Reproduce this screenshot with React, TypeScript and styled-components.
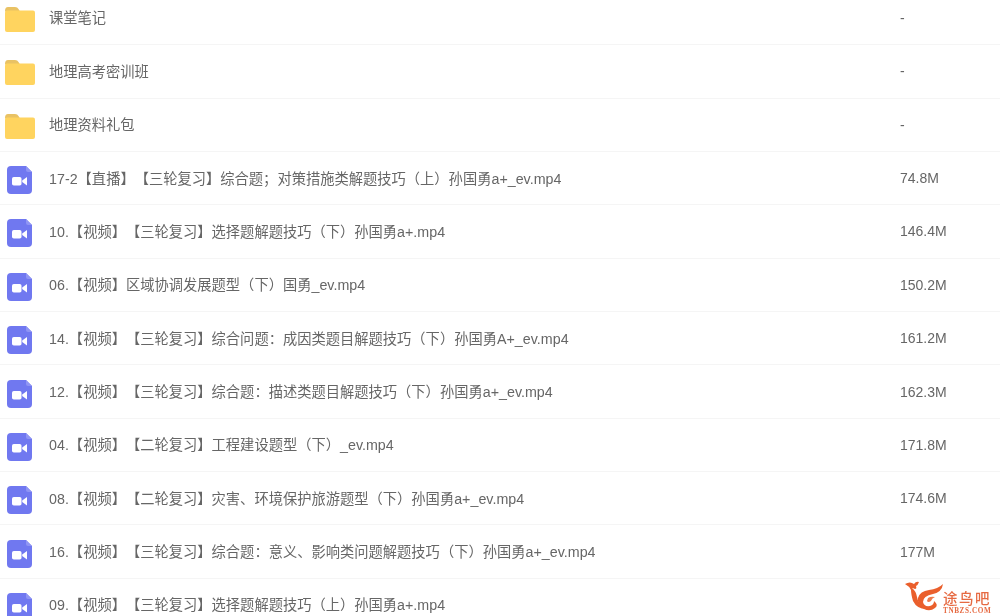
import React from "react";
import styled, { createGlobalStyle } from "styled-components";

const Global = createGlobalStyle`
  html, body { margin: 0; padding: 0; background: #fff; }
  body { width: 1000px; height: 616px; overflow: hidden; }
`;

const Page = styled.div`
  position: relative;
  width: 1000px;
  height: 616px;
  overflow: hidden;
  background: #fff;
  font-family: "Liberation Sans", "Noto Sans CJK SC", sans-serif;
  filter: blur(0.3px);
`;

const List = styled.ul`
  list-style: none;
  margin: -8.2px 0 0;
  padding: 0;
`;

const Row = styled.li`
  box-sizing: border-box;
  height: 53.36px;
  display: grid;
  grid-template-columns: 49px 851px 100px;
  align-items: center;
  border-bottom: 1px solid #f5f5f5;
  color: #666;
  font-size: 14.25px;
`;

const IconCell = styled.div<{ $kind: "folder" | "video" }>`
  display: flex;
  align-items: center;
  padding-left: ${(p) => (p.$kind === "folder" ? "5px" : "7px")};
  padding-top: ${(p) => (p.$kind === "folder" ? "3px" : "4px")};
`;

const Name = styled.span`
  white-space: nowrap;
  text-spacing-trim: space-all;
  letter-spacing: 0.02px;
  margin-top: -2px;
`;

const Size = styled.span`
  white-space: nowrap;
  font-size: 14px;
`;

const Mark = styled.div`
  position: absolute;
  left: 904px;
  top: 580px;
  display: flex;
  align-items: flex-start;
`;

const MarkText = styled.div`
  display: flex;
  flex-direction: column;
  margin-top: 10px;
  color: #e66a42;
  font-family: "Noto Sans CJK SC", sans-serif;
`;

const MarkTitle = styled.span`
  font-size: 14.5px;
  line-height: 15px;
  font-weight: 500;
  letter-spacing: 1.5px;
`;

const MarkSub = styled.span`
  font-family: "Liberation Serif", serif;
  font-size: 7.2px;
  line-height: 8px;
  margin-top: 2px;
  font-weight: 700;
  letter-spacing: 0.6px;
`;

const Folder = () => (
  <svg width="30" height="25" viewBox="0 0 30 25">
    <path d="M0 4 Q0 0 3 0 H10 Q12.5 0 13.5 2 L15 4.5 H0 Z" fill="#e9c264" />
    <rect x="0" y="3.5" width="30" height="21.5" rx="2" fill="#ffd45f" />
  </svg>
);

const Video = () => (
  <svg width="25" height="28" viewBox="0 0 25 28">
    <path d="M4 0 H19 L25 6 V24 Q25 28 21 28 H4 Q0 28 0 24 V4 Q0 0 4 0 Z" fill="#7078f0" />
    <path d="M19 0 L25 6 H21 Q19 6 19 4 Z" fill="#8f95f4" />
    <rect x="5" y="11" width="9.5" height="8.5" rx="1.8" fill="#fff" />
    <path d="M15.2 14.5 L20 11 V19.6 L15.2 16 Z" fill="#fff" />
  </svg>
);

const Logo = () => (
  <svg width="39" height="34" viewBox="0 0 39 34">
    <path d="M1 4 Q6 1 10 4 Q12 1 15 2 Q14 5 12 6 Q13 9 11 9 Q9 8 8 8 Q12 11 13 17 Q14 24 22 29 Q13 29 9 21 Q7 14 7 10 Q5 6 1 4 Z" fill="#ea5f2c" />
    <path d="M39 4 Q38 12 29 14 Q19 16 19 22 Q20 27 26 26 Q30 25 30 21 Q35 25 31 28 Q26 32 20 29 Q13 25 14 18 Q16 11 25 10 Q34 9 39 4 Z" fill="#ea5f2c" />
    <path d="M24 18 Q27 16 31 17 Q28 18 27 21 Q24 23 23 21 Z" fill="#ee7a4c" />
  </svg>
);

type Item = { name: string; size: string; kind: "folder" | "video" };

const items: Item[] = [
  { name: "课堂笔记", size: "-", kind: "folder" },
  { name: "地理高考密训班", size: "-", kind: "folder" },
  { name: "地理资料礼包", size: "-", kind: "folder" },
  { name: "17-2【直播】【三轮复习】综合题；对策措施类解题技巧（上）孙国勇a+_ev.mp4", size: "74.8M", kind: "video" },
  { name: "10.【视频】【三轮复习】选择题解题技巧（下）孙国勇a+.mp4", size: "146.4M", kind: "video" },
  { name: "06.【视频】区域协调发展题型（下）国勇_ev.mp4", size: "150.2M", kind: "video" },
  { name: "14.【视频】【三轮复习】综合问题：成因类题目解题技巧（下）孙国勇A+_ev.mp4", size: "161.2M", kind: "video" },
  { name: "12.【视频】【三轮复习】综合题：描述类题目解题技巧（下）孙国勇a+_ev.mp4", size: "162.3M", kind: "video" },
  { name: "04.【视频】【二轮复习】工程建设题型（下）_ev.mp4", size: "171.8M", kind: "video" },
  { name: "08.【视频】【二轮复习】灾害、环境保护旅游题型（下）孙国勇a+_ev.mp4", size: "174.6M", kind: "video" },
  { name: "16.【视频】【三轮复习】综合题：意义、影响类问题解题技巧（下）孙国勇a+_ev.mp4", size: "177M", kind: "video" },
  { name: "09.【视频】【三轮复习】选择题解题技巧（上）孙国勇a+.mp4", size: "", kind: "video" },
];

export default function App() {
  return (
    <Page>
      <Global />
      <List>
        {items.map((item) => (
          <Row key={item.name}>
            <IconCell $kind={item.kind}>{item.kind === "folder" ? <Folder /> : <Video />}</IconCell>
            <Name>{item.name}</Name>
            <Size>{item.size}</Size>
          </Row>
        ))}
      </List>
      <Mark>
        <Logo />
        <MarkText>
          <MarkTitle>途鸟吧</MarkTitle>
          <MarkSub>TNBZS.COM</MarkSub>
        </MarkText>
      </Mark>
    </Page>
  );
}
